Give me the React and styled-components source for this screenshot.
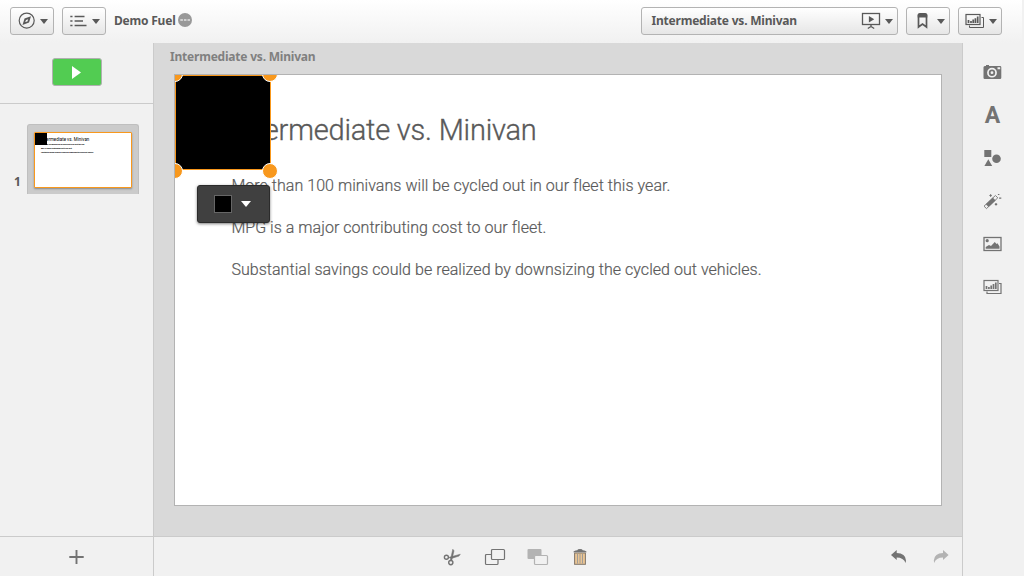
import React from 'react';
import styled, { createGlobalStyle } from 'styled-components';

const GREY = '#737373';
const LINE = '#cbcbcb';
const ORANGE = '#f8981d';

const Global = createGlobalStyle`
  * { box-sizing: border-box; }
  html, body { margin: 0; height: 100%; }
  body { font-family: "Noto Sans", "Open Sans", sans-serif; color: #595959; overflow: hidden; }
  button { font: inherit; color: inherit; padding: 0; }
`;

const Page = styled.div`
  display: grid;
  width: 1024px;
  height: 576px;
  grid-template: 43px 493px 40px / 154px 808px 62px;
  background: #f1f1f1;
`;

const Header = styled.header`
  grid-column: 1 / 4;
  width: 1022px;
  display: flex;
  align-items: flex-start;
  gap: 8px;
  padding: 7px 20px 0 10px;
  background: linear-gradient(#fff, #f1f1f1);
`;

const MenuButton = styled.button`
  display: flex;
  align-items: center;
  width: ${p => (p.$wide ? 257 : 44)}px;
  height: 28px;
  padding: 0 ${p => (p.$snug ? 4 : 5)}px 0 ${p => (p.$wide ? 9.5 : 7)}px;
  border: 1px solid #b3b3b3;
  border-radius: 3px;
  background: linear-gradient(#fff, #e6e6e6);
`;

const Label = styled.span`
  flex: ${p => (p.$grow ? 1 : 'none')};
  text-align: left;
  white-space: nowrap;
  font-size: 12px;
  line-height: 18px;
  font-weight: 700;
  letter-spacing: -0.21px;
  color: ${p => (p.$muted ? '#808080' : '#595959')};
`;

const Caret = styled.span`
  margin-left: auto;
  border: ${p => (p.$light ? 5 : 4)}px solid transparent;
  border-top: ${p => (p.$light ? '6px solid #fff' : '5px solid #595959')};
  border-bottom: 0;
`;

const AppName = styled.div`
  flex: 1;
  display: flex;
  align-items: center;
  gap: 2.5px;
  height: 28px;
`;

const Icon = styled.svg`
  display: block;
  flex: none;
  overflow: visible;
  color: ${p => p.$color || GREY};
`;

const Side = styled.aside`
  border-right: 1px solid ${LINE};
`;

const PlayArea = styled.div`
  display: flex;
  justify-content: center;
  height: 61px;
  padding-top: 15px;
  border-bottom: 1px solid ${LINE};
`;

const Play = styled.button`
  display: grid;
  place-items: center;
  width: 50px;
  height: 28px;
  border: 1px solid #b0b0b0;
  border-radius: 3px;
  background: #52cc52;
`;

const ThumbRow = styled.div`
  display: flex;
  align-items: flex-end;
  padding: 20px 0 0 14px;
`;

const SlideNumber = styled.span`
  width: 13px;
  padding-bottom: 4px;
  font-size: 12px;
  font-weight: 700;
  line-height: 16px;
`;

const ThumbFrame = styled.div`
  width: 112px;
  height: 70px;
  padding: 7px 6px;
  border: 1px solid #bfbfbf;
  border-bottom: 0;
  border-radius: 3px 3px 0 0;
  background: ${LINE};
`;

const Thumb = styled.div`
  position: relative;
  width: 98px;
  height: 56px;
  padding: 3px 0 0 6px;
  border: 1px solid ${ORANGE};
  border-radius: 1px;
  background: #fff;
  box-shadow: 0 1px 2px #888;
  color: #000;
  font-family: Roboto, sans-serif;
  white-space: nowrap;
`;

const ThumbShape = styled.div`
  position: absolute;
  left: 0;
  top: 0;
  width: 12px;
  height: 12px;
  background: #000;
`;

const ThumbHeading = styled.div`
  font-size: 4.45px;
  line-height: 7px;
`;

const ThumbText = styled.div`
  font-size: 1.55px;
  font-weight: 700;
  line-height: 4px;
  -webkit-text-stroke: 0.04px #000;
`;

const Main = styled.main`
  padding: 5px 20px 0;
  background: #d9d9d9;
`;

const SheetTitle = styled.div`
  display: flex;
  height: 26px;
  margin-left: -4px;
`;

const Slide = styled.section`
  position: relative;
  overflow: hidden;
  width: 768px;
  height: 432px;
  padding: 34px 56.4px;
  border: 1px solid #b3b3b3;
  background: #fff;
  font-family: Roboto, sans-serif;
  font-weight: 300;
  white-space: nowrap;
`;

const Heading = styled.h1`
  margin: 0 0 25px;
  font-size: 29px;
  line-height: 42px;
  font-weight: 300;
  letter-spacing: -0.2px;
  -webkit-text-stroke: 0.35px currentColor;
`;

const Paragraph = styled.p`
  margin: 0 0 22px;
  font-size: 16px;
  line-height: 20px;
  letter-spacing: 0.04px;
  -webkit-text-stroke: 0.2px currentColor;
`;

const Shape = styled.div`
  position: absolute;
  left: 0;
  top: 0;
  width: 96px;
  height: 95px;
  border: 1px solid ${ORANGE};
  background: #000;
`;

const Handle = styled.span`
  position: absolute;
  left: ${p => (p.$right ? 87 : -8)}px;
  top: ${p => (p.$bottom ? 88 : -9)}px;
  width: 16px;
  height: 16px;
  border: 1px solid #fff;
  border-radius: 50%;
  background: ${ORANGE};
`;

const ColorPopup = styled.div`
  position: absolute;
  left: 22px;
  top: 110px;
  display: flex;
  align-items: center;
  width: 73px;
  height: 38px;
  padding: 0 18px 0 16px;
  border: 1px solid #2b2b2b;
  border-radius: 3px;
  background: #404040;
  box-shadow: 0 1px 3px rgba(0, 0, 0, 0.5);
`;

const Swatch = styled.span`
  width: 18px;
  height: 18px;
  border: 1px solid #666;
  background: #000;
`;

const Tools = styled.nav`
  grid-column: 3;
  grid-row: 2 / 4;
  display: flex;
  flex-direction: column;
  gap: 23px;
  padding: 19px 0 0 20px;
  border-left: 1px solid ${LINE};
`;

const LetterTool = styled.span`
  width: 19px;
  height: 20px;
  text-align: center;
  font: 700 23px/21px Roboto, sans-serif;
  color: ${GREY};
`;

const AddBar = styled.footer`
  display: flex;
  justify-content: center;
  padding-top: 12px;
  border-top: 1px solid ${LINE};
  border-right: 1px solid ${LINE};
`;

const ActionBar = styled.footer`
  display: flex;
  gap: 21px;
  padding: 10px 9px 0 288px;
  border-top: 1px solid ${LINE};
`;

const Spacer = styled.span`
  flex: 1;
`;

const svg = (w, h, color) => ({
  width: w, height: h, viewBox: `0 0 ${w} ${h}`, fill: 'none', stroke: 'currentColor', $color: color,
});

const ChartStack = ({ color }) => (
  <Icon {...svg(18, 18, color)}>
    <path d="M15.5 5.5H17.5V15.5H3.5V13.5" />
    <rect x="0" y="2.5" width="14" height="10" strokeWidth="1.2" />
    <path d="M2.5 11V8M5 11V9M7.2 11V7.5M9.4 11V6.2M11.7 11V4.5" strokeWidth="1.7" />
  </Icon>
);

const bodyText = [
  'More than 100 minivans will be cycled out in our fleet this year.',
  'MPG is a major contributing cost to our fleet.',
  'Substantial savings could be realized by downsizing the cycled out vehicles.',
];

export default function App() {
  const dark = '#595959';
  return (
    <>
      <Global />
      <Page>
        <Header>
          <MenuButton>
            <Icon {...svg(18, 18, dark)}>
              <circle cx="8.7" cy="8.6" r="7.5" strokeWidth="1.2" />
              <path d="M13 4.2L11 10.6L4.5 13L6.5 6.6Z" fill="currentColor" stroke="none" />
              <path d="M10.2 7.2L9.4 9.4L7.2 10.1L8 7.9Z" fill="#f5f5f5" stroke="none" />
            </Icon>
            <Caret />
          </MenuButton>
          <MenuButton>
            <Icon {...svg(18, 18, dark)}>
              <path d="M0.3 4.5H2.5M0.3 9H2.5M0.3 13.5H2.5M4.6 4.5H14.5M4.6 9H13M4.6 13.5H16.5" strokeWidth="1.7" />
            </Icon>
            <Caret />
          </MenuButton>
          <AppName>
            <Label>Demo Fuel</Label>
            <Icon {...svg(14, 16, '#999')}>
              <circle cx="7" cy="7" r="7" fill="currentColor" stroke="none" />
              <path d="M2.3 7H4.9M5.9 7H8.5M9.5 7H12" stroke="#e4e4e4" strokeWidth="1.3" />
            </Icon>
          </AppName>
          <MenuButton $wide $snug>
            <Label $grow>Intermediate vs. Minivan</Label>
            <Icon {...svg(22, 18, dark)}>
              <rect x="-.5" y="1.5" width="17" height="11" strokeWidth="1.3" />
              <path d="M5.9 4V10.6L11.2 7.3Z" fill="currentColor" stroke="none" />
              <path d="M8 13V15M4.8 16.5L8 14.5L11.2 16.5" strokeWidth="1.4" />
            </Icon>
            <Caret />
          </MenuButton>
          <MenuButton $snug>
            <Icon {...svg(18, 18, dark)}>
              <path d="M4.5 2.5V15L8.5 12L12.5 15V2.5" strokeWidth="1.7" />
              <path d="M3.7 5.5V3Q3.7 1 5.7 1H11.3Q13.3 1 13.3 3V5.5Z" fill="currentColor" stroke="none" />
            </Icon>
            <Caret />
          </MenuButton>
          <MenuButton $snug>
            <ChartStack color={dark} />
            <Caret />
          </MenuButton>
        </Header>

        <Side>
          <PlayArea>
            <Play>
              <Icon {...svg(10, 13, '#fff')}>
                <path d="M0 0V13L9 6.5Z" fill="currentColor" stroke="none" />
              </Icon>
            </Play>
          </PlayArea>
          <ThumbRow>
            <SlideNumber>1</SlideNumber>
            <ThumbFrame>
              <Thumb>
                <ThumbHeading>Intermediate vs. Minivan</ThumbHeading>
                {bodyText.map(t => <ThumbText key={t}>{t}</ThumbText>)}
                <ThumbShape />
              </Thumb>
            </ThumbFrame>
          </ThumbRow>
        </Side>

        <Main>
          <SheetTitle><Label $muted>Intermediate vs. Minivan</Label></SheetTitle>
          <Slide>
            <Heading>Intermediate vs. Minivan</Heading>
            {bodyText.map(t => <Paragraph key={t}>{t}</Paragraph>)}
            <Shape />
            <Handle />
            <Handle $right />
            <Handle $bottom />
            <Handle $right $bottom />
            <ColorPopup><Swatch /><Caret $light /></ColorPopup>
          </Slide>
        </Main>

        <Tools>
          <Icon {...svg(20, 20)}>
            <path fillRule="evenodd" fill="currentColor" stroke="none" d="M2.5 4H3V3H6V4H17Q18.3 4 18.3 5.2V15.8Q18.3 17 17 17H1.7Q.5 17 .5 15.8V5.2Q.5 4 2.5 4ZM9 5.8A4.9 4.9 0 1 0 9 15.6A4.9 4.9 0 1 0 9 5.8ZM14.5 5.3V7.2H17.2V5.3Z" />
            <circle cx="9" cy="10.7" r="2.3" strokeWidth="1.8" />
          </Icon>
          <LetterTool>A</LetterTool>
          <Icon {...svg(20, 20)}>
            <g fill="currentColor" stroke="none">
              <rect x="1.3" y="2" width="7" height="7" />
              <path d="M5.3 11.3L9.2 18H1.4Z" />
              <circle cx="13.5" cy="10.8" r="4.3" />
            </g>
          </Icon>
          <Icon {...svg(20, 20)}>
            <path d="M1 15.2L12.4 4.5L14.8 6.8L3.5 17.6Z" strokeWidth=".9" />
            <path d="M4.2 14.6L11.2 8" strokeWidth="4" />
            <path d="M6.4 4.5H8.8M7.6 3.3V5.7M11.8 13.3H14.2M13 12.1V14.5M16.1 7.2H18.3M14.9 3.5H16.4" strokeWidth="1.2" />
          </Icon>
          <Icon {...svg(20, 20)}>
            <rect x="1" y="3.5" width="17" height="13" strokeWidth="1.3" />
            <circle cx="4.2" cy="6.7" r="1.6" fill="currentColor" stroke="none" />
            <path d="M2.7 14.8V13L6 11L8 12L11.8 8L13.5 10L14.5 9.3L16.5 12.5V14.8Z" fill="currentColor" stroke="none" />
          </Icon>
          <Icon {...svg(20, 20)}>
            <path d="M16 6.5H18V16.5H4V14.5" strokeWidth="1.2" />
            <rect x="1" y="3.5" width="14" height="10" strokeWidth="1.2" />
            <path d="M3.5 12V9M5.9 12V10M8.2 12V8.5M10.5 12V7M12.8 12V5.5" strokeWidth="1.7" />
          </Icon>
        </Tools>

        <AddBar>
          <Icon {...svg(15, 15)}>
            <path d="M7.5 .9V14.9M.3 8H14.7" strokeWidth="1.9" />
          </Icon>
        </AddBar>

        <ActionBar>
          <Icon {...svg(22, 20)}>
            <circle cx="4.4" cy="10.3" r="2" strokeWidth="1.4" />
            <circle cx="8.8" cy="15.6" r="2.1" strokeWidth="1.4" />
            <path d="M6.3 10.5L18.3 7.2L17 9.1L9.6 11.4ZM8.2 13.8L10.8 2.2L12 3.8L9.8 13.2Z" fill="currentColor" strokeWidth=".5" />
          </Icon>
          <Icon {...svg(22, 20)}>
            <path d="M6.5 7.5H1.5Q.5 7.5 .5 8.5V16.5Q.5 17.5 1.5 17.5H12Q13 17.5 13 16.5V12.5" strokeWidth="1.2" />
            <rect x="6.5" y="2.5" width="13" height="10" rx="1" strokeWidth="1.2" />
          </Icon>
          <Icon {...svg(22, 20, '#b3b3b3')}>
            <rect x="-.5" y="2" width="14" height="10" rx="1" fill="currentColor" stroke="none" />
            <rect x="6.5" y="8.5" width="13" height="9" rx="1" fill="#f1f1f1" strokeWidth="1.2" />
          </Icon>
          <Icon {...svg(22, 20)}>
            <path d="M2.3 5.2Q2.5 3.6 6.3 3.2Q6.5 2 9 2Q11.5 2 11.7 3.2Q15.5 3.6 15.7 5.2Z" fill="currentColor" stroke="none" />
            <rect x="3.6" y="6" width="10.8" height="11.3" fill="#e9c594" stroke="#80766a" />
            <path d="M6.5 7V16.5M9 7V16.5M11.5 7V16.5" stroke="#a09c98" />
          </Icon>
          <Spacer />
          <Icon {...svg(22, 20)}>
            <path d="M3 8L8.7 3V6Q17.5 6 18 13.5L17.6 16Q15.5 10.5 8.7 10.5V13Z" fill="currentColor" stroke="none" />
          </Icon>
          <Icon {...svg(22, 20, '#b3b3b3')}>
            <path d="M17.6 8L12 3V6Q3.5 6 2.8 13.5L3.2 16Q5 10.5 12 10.5V13Z" fill="currentColor" stroke="none" />
          </Icon>
        </ActionBar>
      </Page>
    </>
  );
}
